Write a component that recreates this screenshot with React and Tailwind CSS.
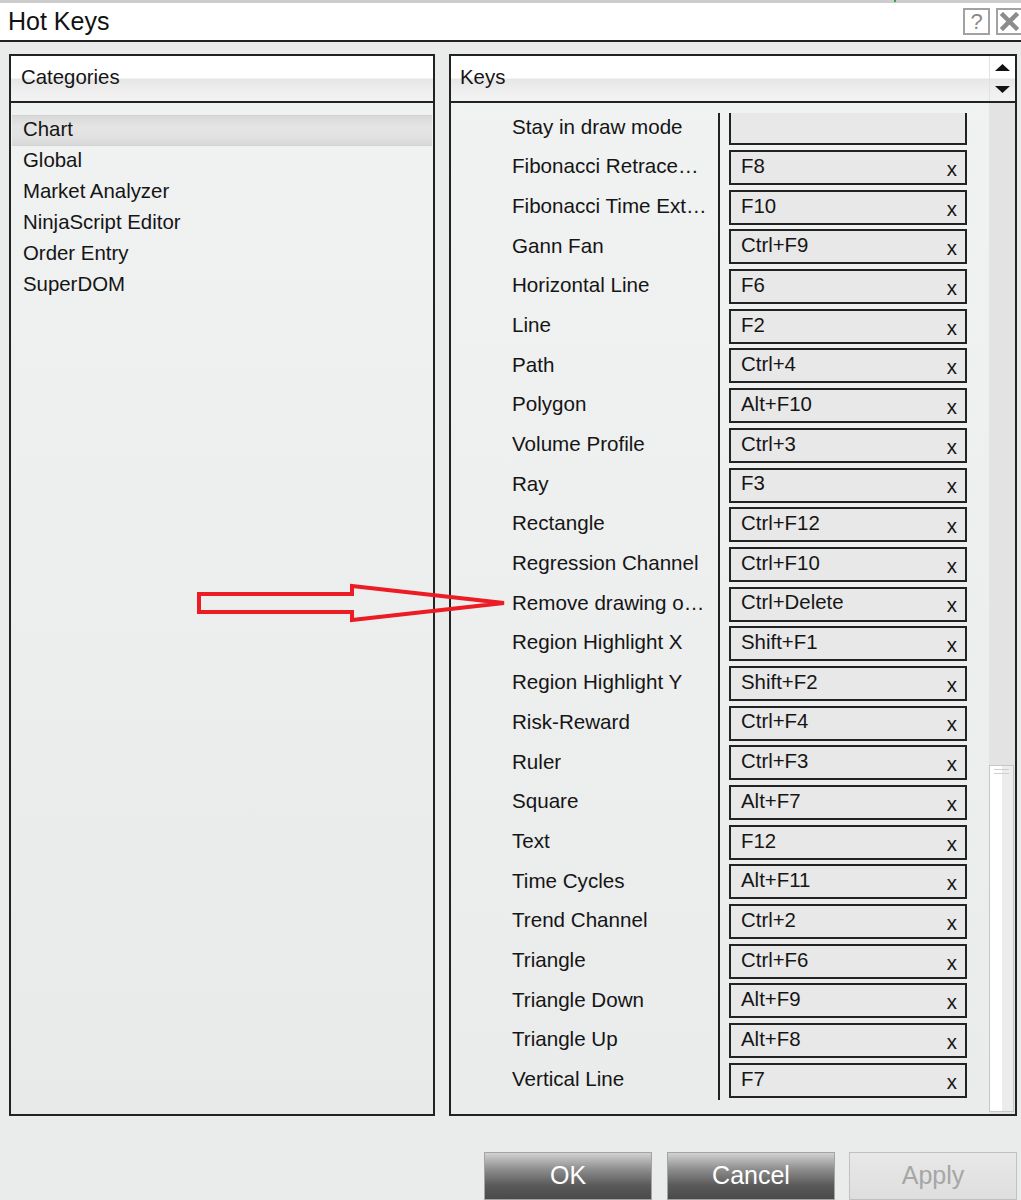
import React from "react";

const rows = [
  ["Stay in draw mode", ""],
  ["Fibonacci Retracements", "F8"],
  ["Fibonacci Time Extensions", "F10"],
  ["Gann Fan", "Ctrl+F9"],
  ["Horizontal Line", "F6"],
  ["Line", "F2"],
  ["Path", "Ctrl+4"],
  ["Polygon", "Alt+F10"],
  ["Volume Profile", "Ctrl+3"],
  ["Ray", "F3"],
  ["Rectangle", "Ctrl+F12"],
  ["Regression Channel", "Ctrl+F10"],
  ["Remove drawing objects", "Ctrl+Delete"],
  ["Region Highlight X", "Shift+F1"],
  ["Region Highlight Y", "Shift+F2"],
  ["Risk-Reward", "Ctrl+F4"],
  ["Ruler", "Ctrl+F3"],
  ["Square", "Alt+F7"],
  ["Text", "F12"],
  ["Time Cycles", "Alt+F11"],
  ["Trend Channel", "Ctrl+2"],
  ["Triangle", "Ctrl+F6"],
  ["Triangle Down", "Alt+F9"],
  ["Triangle Up", "Alt+F8"],
  ["Vertical Line", "F7"],
];

const categories = ["Chart", "Global", "Market Analyzer", "NinjaScript Editor", "Order Entry", "SuperDOM"];

const headerBg =
  "bg-[linear-gradient(to_bottom,#ffffff_0%,#ffffff_49%,#e6e6e6_51%,#eeeeee_75%,#f3f3f3_100%)]";

export default function App() {
  return (
    <div className="relative w-[1021px] h-[1200px] overflow-hidden bg-[#eaebeb] font-['Liberation_Sans',Arial,sans-serif] text-[#151515]">
      {/* top strip */}
      <div className="h-[3px] bg-[#cdcdcd] flex">
        <div className="ml-[894px] w-[2px] h-[2px] bg-[#2aa84a]" />
      </div>
      {/* title bar */}
      <div className="h-[39px] bg-white border-b-2 border-[#222] flex items-center pl-[8px]">
        <span className="text-[25px] leading-none text-[#111]">Hot Keys</span>
        <div className="ml-auto mr-[-2px] flex items-center gap-[6px]">
          <div className="w-[27px] h-[27px] border-2 border-[#a2a2a2] bg-white flex items-center justify-center text-[22px] leading-none text-[#8a8a8a]">
            ?
          </div>
          <div className="w-[27px] h-[27px] border-2 border-[#a2a2a2] bg-white flex items-center justify-center">
            <svg width="19" height="19" viewBox="0 0 19 19">
              <path d="M3 3 L16 16 M16 3 L3 16" stroke="#8c8c8c" strokeWidth="4.5" strokeLinecap="square" />
            </svg>
          </div>
        </div>
      </div>

      {/* panels */}
      <div className="flex mt-[12px] ml-[9px] h-[1062px]">
        {/* Categories */}
        <div className="w-[426px] h-full border-2 border-[#222] bg-[linear-gradient(to_bottom,#f1f2f2,#e8e9e9)] flex flex-col">
          <div className={`h-[47px] border-b-2 border-[#222] ${headerBg} flex items-center pl-[10px] pb-[2px] text-[20.4px]`}>
            Categories
          </div>
          <div className="pt-[12px] flex flex-col">
            {categories.map((c, i) => (
              <div
                key={c}
                className={
                  "h-[31px] mx-[1px] flex items-center pl-[11px] pb-[3px] text-[20.4px] " +
                  (i === 0
                    ? "border-y border-[#d2d2d2] bg-[linear-gradient(to_bottom,#d9d9d9,#e4e4e4_35%,#e2e2e2_70%,#d8d8d8)]"
                    : "")
                }
              >
                {c}
              </div>
            ))}
          </div>
        </div>

        {/* Keys */}
        <div className="ml-[14px] w-[568px] h-full border-2 border-[#222] bg-[linear-gradient(to_bottom,#f1f2f2,#eaebeb)] flex flex-col">
          <div className={`h-[47px] border-b-2 border-[#222] ${headerBg} flex`}>
            <div className="flex-1 flex items-center pl-[9px] pb-[2px] text-[20.4px]">Keys</div>
            <div className="w-[26px] border-l border-[#e2e2e2] flex flex-col items-center justify-center gap-[15px]">
              <svg width="15" height="7" viewBox="0 0 15 7">
                <path d="M0 7 L7.5 0 L15 7 Z" fill="#111" />
              </svg>
              <svg width="15" height="7" viewBox="0 0 15 7">
                <path d="M0 0 L15 0 L7.5 7 Z" fill="#111" />
              </svg>
            </div>
          </div>
          <div className="flex-1 flex">
            <div className="flex-1 pt-[10px]">
              <div className="h-[990px] overflow-hidden">
                <div className="-mt-[5px]">
                  {rows.map(([label, key]) => (
                    <div key={label} className="h-[39.7px] flex items-center">
                      <div className="w-[269px] h-full border-r-2 border-[#222] pl-[61px] pr-[7px] flex items-center">
                        <span className="truncate text-[20.6px] leading-none py-[2px] mb-[2px]">{label}</span>
                      </div>
                      <div className="ml-[9px] w-[238px] h-[35px] border-2 border-[#222] bg-[#e8e8e8] flex items-center justify-between pl-[10px] pr-[8px] text-[20.4px] leading-none">
                        <span className="pb-[3px]">{key}</span>
                        {key ? <span className="pt-[3px]">x</span> : null}
                      </div>
                    </div>
                  ))}
                </div>
              </div>
            </div>
            <div className="w-[26px] bg-[#e3e3e3] flex flex-col">
              <div className="mt-[662px] h-[347px] w-[25px] border border-[#c6c6c6] bg-[linear-gradient(to_right,#ffffff_0%,#ffffff_52%,#ececec_52%,#ececec_100%)] flex flex-col items-center pt-[3px] gap-[3px]">
                <div className="w-[15px] h-[1px] bg-[#cfcfcf]" />
                <div className="w-[15px] h-[1px] bg-[#cfcfcf]" />
              </div>
            </div>
          </div>
        </div>
      </div>

      {/* buttons */}
      <div className="flex mt-[36px]">
        <div className="ml-[484px] w-[168px] h-[48px] border border-[#a4a4a4] bg-[linear-gradient(to_bottom,#d2d2d2_0%,#8e8e8e_35%,#5a5a5a_70%,#4a4a4a_100%)] flex items-center justify-center text-white text-[25px]">
          OK
        </div>
        <div className="ml-[15px] w-[168px] h-[48px] border border-[#a4a4a4] bg-[linear-gradient(to_bottom,#d2d2d2_0%,#8e8e8e_35%,#5a5a5a_70%,#4a4a4a_100%)] flex items-center justify-center text-white text-[25px]">
          Cancel
        </div>
        <div className="ml-[14px] w-[168px] h-[48px] border border-[#c0c0c0] bg-[linear-gradient(to_bottom,#e8e8e8,#dedede)] flex items-center justify-center text-[#a6a6a6] text-[25px]">
          Apply
        </div>
      </div>

      {/* red arrow annotation */}
      <svg
        className="absolute left-0 top-0 pointer-events-none"
        width="1021"
        height="1200"
        viewBox="0 0 1021 1200"
      >
        <path
          d="M199 594 L352 594 L352 586 L504 603 L352 620 L352 612 L199 612 Z"
          fill="none"
          stroke="#ec1c24"
          strokeWidth="4"
          strokeLinejoin="miter"
        />
      </svg>
    </div>
  );
}
